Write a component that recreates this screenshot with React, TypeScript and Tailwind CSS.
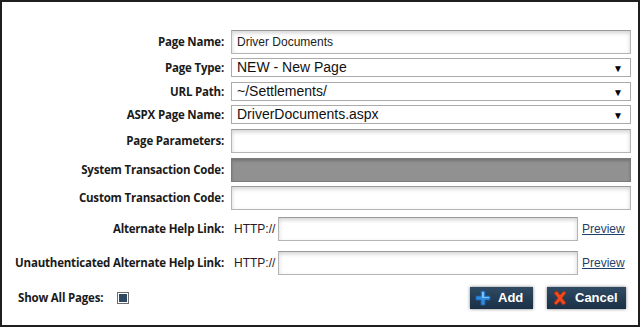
import { useState } from "react";

const labelCls =
  "flex w-[229px] shrink-0 justify-end whitespace-nowrap pr-[7px] font-['Open_Sans',sans-serif] font-bold text-[11.5px] tracking-[-0.2px] text-[#1a1a1a] leading-none";

const inputCls =
  "h-[24px] border border-[#b5b5b5] border-t-[#9a9a9a] bg-white shadow-[inset_0_2px_4px_rgba(0,0,0,0.18)] outline-none px-[5px] font-['Liberation_Sans',sans-serif] text-[12px] text-[#222]";

function Select({ value }: { value: string }) {
  return (
    <div className="relative flex h-[19px] w-[400px] items-center border border-[#ababab] bg-white pl-[5px] font-['Liberation_Sans',sans-serif] text-[14px] text-[#111]">
      {value}
      <span className="absolute right-[7px] top-[2px] text-[10px] text-black">▼</span>
    </div>
  );
}

export default function App() {
  const [showAll, setShowAll] = useState(true);

  return (
    <div className="h-[327px] w-[642px] bg-white">
      <div className="flex h-[327px] w-[640px] flex-col border-2 border-[#1f1f1f] pt-[28px]">
        {/* Page Name */}
        <div className="flex items-center">
          <span className={labelCls}>Page Name:</span>
          <input className={`${inputCls} w-[400px]`} defaultValue="Driver Documents" />
        </div>

        <div className="mt-[4px] flex items-center">
          <span className={labelCls}>Page Type:</span>
          <Select value="NEW - New Page" />
        </div>

        <div className="mt-[5px] flex items-center">
          <span className={labelCls}>URL Path:</span>
          <Select value="~/Settlements/" />
        </div>

        <div className="mt-[4px] flex items-center">
          <span className={labelCls}>ASPX Page Name:</span>
          <Select value="DriverDocuments.aspx" />
        </div>

        <div className="mt-[5px] flex items-center">
          <span className={labelCls}>Page Parameters:</span>
          <input className={`${inputCls} w-[400px]`} />
        </div>

        <div className="mt-[5px] flex items-center">
          <span className={labelCls}>System Transaction Code:</span>
          <div className="h-[24px] w-[400px] border border-[#7a7a7a] bg-[#919191] shadow-[inset_0_2px_3px_rgba(0,0,0,0.2)]" />
        </div>

        <div className="mt-[4px] flex items-center">
          <span className={labelCls}>Custom Transaction Code:</span>
          <input className={`${inputCls} w-[400px]`} />
        </div>

        {/* help links */}
        <div className="mt-[7px] flex items-center">
          <span className={labelCls}>Alternate Help Link:</span>
          <span className="w-[47px] pl-[3px] font-['Liberation_Sans',sans-serif] text-[12px] text-[#2a1a2a]">HTTP://</span>
          <input className={`${inputCls} w-[300px]`} />
          <a className="ml-[4px] font-['Liberation_Sans',sans-serif] text-[12px] text-[#1f3f6a] underline">Preview</a>
        </div>

        <div className="mt-[10px] flex items-center">
          <span className={labelCls}>Unauthenticated Alternate Help Link:</span>
          <span className="w-[47px] pl-[3px] font-['Liberation_Sans',sans-serif] text-[12px] text-[#2a1a2a]">HTTP://</span>
          <input className={`${inputCls} w-[300px]`} />
          <a className="ml-[4px] font-['Liberation_Sans',sans-serif] text-[12px] text-[#1f3f6a] underline">Preview</a>
        </div>

        {/* footer */}
        <div className="mt-[12px] flex items-center pl-[16px] pr-[12px]">
          <span className="font-['Open_Sans',sans-serif] text-[11.5px] font-bold tracking-[-0.2px] text-[#1a1a1a]">Show All Pages:</span>
          <button
            onClick={() => setShowAll(!showAll)}
            className="ml-[14px] flex h-[12px] w-[12px] items-center justify-center border border-[#6d6d6d] bg-white"
          >
            {showAll && <span className="h-[8px] w-[8px] bg-[#2d4a62]" />}
          </button>

          <div className="ml-auto flex gap-[14px]">
            <button className="flex h-[22px] w-[63px] items-center gap-[7px] bg-gradient-to-b from-[#2f4b63] to-[#1b3046] pl-[5px] font-['Liberation_Sans',sans-serif] text-[13px] font-bold text-white shadow-[0_0_3px_rgba(0,0,0,0.5)]">
              <svg width="16" height="16" viewBox="0 0 16 16">
                <path d="M6 1h4v5h5v4h-5v5H6v-5H1V6h5z" fill="#2f8be0" stroke="#1a5fa8" strokeWidth="0.8" />
                <path d="M7 2h2v5h5v1H9v0H7z" fill="#7cc0f5" />
              </svg>
              Add
            </button>
            <button className="flex h-[22px] w-[79px] items-center gap-[7px] bg-gradient-to-b from-[#2f4b63] to-[#1b3046] pl-[5px] font-['Liberation_Sans',sans-serif] text-[13px] font-bold text-white shadow-[0_0_3px_rgba(0,0,0,0.5)]">
              <svg width="16" height="16" viewBox="0 0 16 16">
                <path d="M2 3l3-2 3 4 4-4 2 2-4 5 4 5-3 2-3-4-4 4-2-2 4-5z" fill="#ef4a1e" stroke="#b8260a" strokeWidth="0.7" />
              </svg>
              Cancel
            </button>
          </div>
        </div>
      </div>
    </div>
  );
}
